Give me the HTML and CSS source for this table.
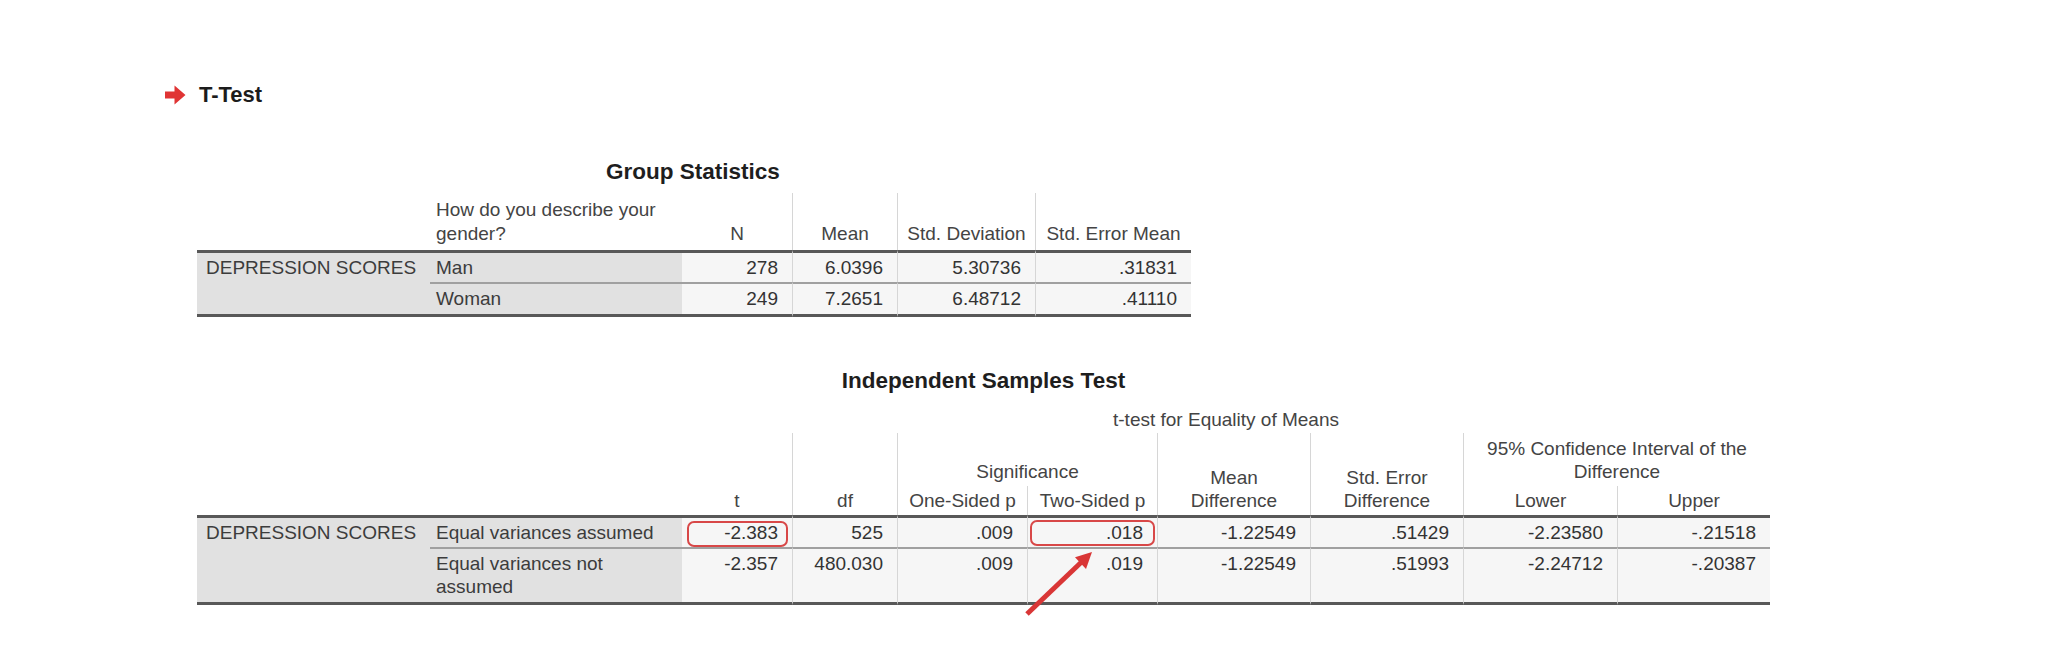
FILE: index.html
```html
<!DOCTYPE html>
<html lang="en">
<head>
<meta charset="utf-8">
<title>T-Test output</title>
<link rel="stylesheet" href="styles.css">
</head>
<body>
<div class="page">
  <svg class="bg" width="2048" height="670" viewBox="0 0 2048 670" aria-hidden="true">
    <g fill="#f6f6f6">
      <polygon points="-310,670 248,113 805,670"/>
      <polygon points="330,560 560,330 790,560"/>
      <polygon points="530,560 760,340 990,560"/>
      <polygon points="700,560 930,335 1160,560"/>
      <polygon points="1380,560 1500,440 1620,560"/>
      <polygon points="1570,560 1690,440 1810,560"/>
      <polygon points="962,670 1032,600 1102,670"/>
    </g>
  </svg>

  <h1 class="proc">
    <svg class="proc-icon" width="21" height="20" viewBox="0 0 21 20" aria-hidden="true">
      <path d="M0 6.5 H9.5 V0.5 L20.5 10 L9.5 19.5 V13.5 H0 Z" fill="#e03434"/>
    </svg>
    <span>T-Test</span>
  </h1>

  <div class="pivot gs">
    <div class="title">Group Statistics</div>
    <table class="tbl gs-table">
      <colgroup>
        <col class="w-lab"><col class="w-sub"><col class="w-110"><col class="w-105"><col class="w-138"><col class="w-156">
      </colgroup>
      <thead>
        <tr class="hd">
          <th></th>
          <th class="left">How do you describe your<br>gender?</th>
          <th>N</th>
          <th class="vl">Mean</th>
          <th class="vl">Std. Deviation</th>
          <th class="vl">Std. Error Mean</th>
        </tr>
      </thead>
      <tbody>
        <tr class="r1">
          <th class="rowlab" rowspan="2">DEPRESSION SCORES</th>
          <th class="sub">Man</th>
          <td>278</td>
          <td class="vl">6.0396</td>
          <td class="vl">5.30736</td>
          <td class="vl">.31831</td>
        </tr>
        <tr class="r2">
          <th class="sub">Woman</th>
          <td>249</td>
          <td class="vl">7.2651</td>
          <td class="vl">6.48712</td>
          <td class="vl">.41110</td>
        </tr>
      </tbody>
    </table>
  </div>

  <div class="pivot ist">
    <div class="title center">Independent Samples Test</div>
    <table class="tbl ist-table">
      <colgroup>
        <col class="w-lab"><col class="w-sub"><col class="w-110"><col class="w-105"><col class="w-130"><col class="w-130"><col class="w-153"><col class="w-153"><col class="w-154"><col class="w-153">
      </colgroup>
      <thead>
        <tr class="ra">
          <th colspan="2" rowspan="3" class="blank"></th>
          <th colspan="8" class="span">t-test for Equality of Means</th>
        </tr>
        <tr class="rb">
          <th rowspan="2">t</th>
          <th rowspan="2" class="vl">df</th>
          <th colspan="2" class="vl">Significance</th>
          <th rowspan="2" class="vl">Mean<br>Difference</th>
          <th rowspan="2" class="vl">Std. Error<br>Difference</th>
          <th colspan="2" class="vl">95% Confidence Interval of the<br>Difference</th>
        </tr>
        <tr class="rc">
          <th class="vl">One-Sided p</th>
          <th class="vl">Two-Sided p</th>
          <th class="vl">Lower</th>
          <th class="vl">Upper</th>
        </tr>
      </thead>
      <tbody>
        <tr class="r1">
          <th class="rowlab" rowspan="2">DEPRESSION SCORES</th>
          <th class="sub">Equal variances assumed</th>
          <td class="hl hl-t">-2.383</td>
          <td class="vl">525</td>
          <td class="vl">.009</td>
          <td class="vl hl hl-p">.018</td>
          <td class="vl">-1.22549</td>
          <td class="vl">.51429</td>
          <td class="vl">-2.23580</td>
          <td class="vl">-.21518</td>
        </tr>
        <tr class="r2">
          <th class="sub">Equal variances not<br>assumed</th>
          <td>-2.357</td>
          <td class="vl">480.030</td>
          <td class="vl">.009</td>
          <td class="vl">.019</td>
          <td class="vl">-1.22549</td>
          <td class="vl">.51993</td>
          <td class="vl">-2.24712</td>
          <td class="vl">-.20387</td>
        </tr>
      </tbody>
    </table>
  </div>

  <svg class="pointer" width="80" height="76" viewBox="0 0 80 76" aria-hidden="true">
    <line x1="7" y1="69" x2="61" y2="17.5" stroke="#d93636" stroke-width="5"/>
    <polygon points="72,7 66,24 55,12.2" fill="#d93636"/>
  </svg>
</div>
</body>
</html>
```

FILE: styles.css
```css
html, body {
  margin: 0;
  padding: 0;
  background: #ffffff;
}

body {
  font-family: "Liberation Sans", Arial, sans-serif;
  color: #3a3a3a;
}

.page {
  position: relative;
  width: 2048px;
  height: 670px;
  padding-top: 82px;
  box-sizing: border-box;
  overflow: hidden;
}

.bg {
  position: absolute;
  left: 0;
  top: 0;
  z-index: -1;
}

.proc {
  display: flex;
  align-items: center;
  gap: 13px;
  margin: 0 0 0 165px;
  height: 26px;
  font-size: 22px;
  line-height: 26px;
  font-weight: bold;
  color: #1c1c1c;
}

.proc-icon {
  display: block;
  flex: none;
}

.pivot {
  margin-left: 197px;
}

.gs {
  margin-top: 51px;
}

.ist {
  margin-top: 51px;
}

.title {
  font-size: 22.5px;
  line-height: 26px;
  font-weight: bold;
  color: #1e1e1e;
}

.gs .title {
  padding-left: 409px;
  margin-bottom: 8px;
}

.ist .title {
  width: 1573px;
  text-align: center;
}

.tbl {
  border-collapse: separate;
  border-spacing: 0;
  table-layout: fixed;
  font-size: 19px;
  line-height: 23px;
}

.gs-table { width: 994px; }
.ist-table { width: 1573px; }

.w-lab { width: 233px; }
.w-sub { width: 252px; }
.w-110 { width: 110px; }
.w-105 { width: 105px; }
.w-138 { width: 138px; }
.w-156 { width: 156px; }
.w-130 { width: 130px; }
.w-153 { width: 153px; }
.w-154 { width: 154px; }

.tbl th,
.tbl td {
  font-weight: normal;
  padding: 3px 6px;
  white-space: nowrap;
}

.tbl thead th {
  color: #444444;
  text-align: center;
  vertical-align: bottom;
}

.tbl thead th.left {
  text-align: left;
}

.hd th {
  padding-top: 5px;
  padding-bottom: 4px;
  line-height: 24px;
}

.ra th.blank {
  padding: 0;
}

.ra th.span {
  padding: 14px 0 2px;
  text-align: center;
}

.rb th {
  padding-top: 4px;
  padding-bottom: 3px;
}

.vl {
  border-left: 1px solid #d6d6d6;
}

.ra th {
  border-left: none;
}

.tbl tbody th {
  text-align: left;
  vertical-align: top;
  background: #e1e1e1;
  color: #3c3c3c;
}

.tbl tbody th.rowlab {
  padding-left: 9px;
  border-bottom: 3px solid #585858;
}

.tbl tbody td {
  background: #f6f6f6;
  text-align: right;
  vertical-align: top;
  padding-right: 14px;
  color: #333333;
}

.r1 > th,
.r1 > td {
  border-top: 3px solid #585858;
}

.r2 > th,
.r2 > td {
  border-top: 2px solid #a0a0a0;
  border-bottom: 3px solid #585858;
}

.r2 > th {
  padding-bottom: 4px;
}

.hl {
  position: relative;
}

.hl::after {
  content: "";
  position: absolute;
  border: 2px solid #d84848;
  border-radius: 7px;
}

.hl-t::after {
  left: 5px;
  right: 4px;
  top: 3px;
  bottom: 0;
}

.hl-p::after {
  left: 2px;
  right: 2px;
  top: 2px;
  bottom: 1px;
}

.pointer {
  position: absolute;
  left: 1020px;
  top: 545px;
}
```
